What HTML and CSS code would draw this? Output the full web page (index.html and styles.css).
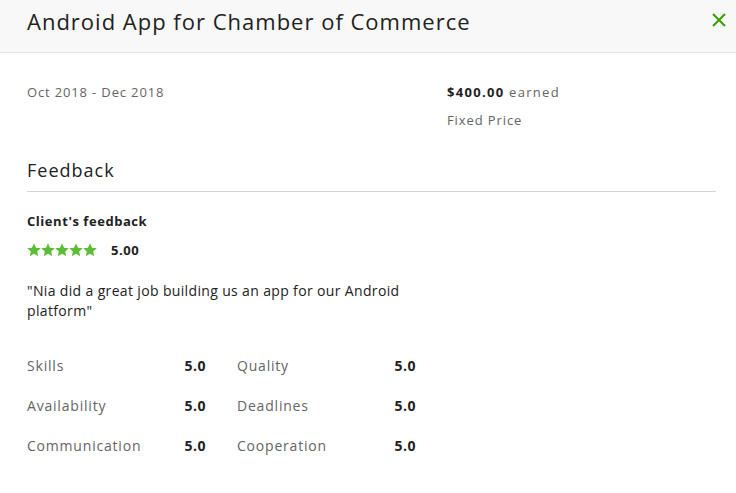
FILE: index.html
```html
<!DOCTYPE html>
<html>
<head>
<meta charset="utf-8">
<link rel="stylesheet" href="styles.css">
</head>
<body>
<div class="modal">
  <header class="head">
    <h1 class="title">Android App for Chamber of Commerce</h1>
    <svg class="close" width="14" height="14" viewBox="0 0 14 14"><path d="M1 1 L13 13 M13 1 L1 13" stroke="#37a000" stroke-width="2" fill="none"/></svg>
  </header>
  <div class="body">
    <div class="meta">
      <div class="dates">Oct 2018 - Dec 2018</div>
      <div class="price">
        <div class="earned"><strong>$400.00</strong> earned</div>
        <div class="type">Fixed Price</div>
      </div>
    </div>
    <h2 class="section">Feedback</h2>
    <h3 class="sub">Client's feedback</h3>
    <div class="rating">
      <div class="stars">
        <svg viewBox="0 0 24 24"><path d="M12 0.5l3.4 7.6 8.2.8-6.2 5.5 1.8 8.1L12 18.3 4.8 22.5l1.8-8.1L0.4 8.9l8.2-.8z"/></svg>
        <svg viewBox="0 0 24 24"><path d="M12 0.5l3.4 7.6 8.2.8-6.2 5.5 1.8 8.1L12 18.3 4.8 22.5l1.8-8.1L0.4 8.9l8.2-.8z"/></svg>
        <svg viewBox="0 0 24 24"><path d="M12 0.5l3.4 7.6 8.2.8-6.2 5.5 1.8 8.1L12 18.3 4.8 22.5l1.8-8.1L0.4 8.9l8.2-.8z"/></svg>
        <svg viewBox="0 0 24 24"><path d="M12 0.5l3.4 7.6 8.2.8-6.2 5.5 1.8 8.1L12 18.3 4.8 22.5l1.8-8.1L0.4 8.9l8.2-.8z"/></svg>
        <svg viewBox="0 0 24 24"><path d="M12 0.5l3.4 7.6 8.2.8-6.2 5.5 1.8 8.1L12 18.3 4.8 22.5l1.8-8.1L0.4 8.9l8.2-.8z"/></svg>
      </div>
      <strong class="score">5.00</strong>
    </div>
    <p class="quote">"Nia did a great job building us an app for our Android platform"</p>
    <div class="scores">
      <div class="row"><span class="lbl">Skills</span><span class="val">5.0</span></div>
      <div class="row"><span class="lbl">Quality</span><span class="val">5.0</span></div>
      <div class="row"><span class="lbl">Availability</span><span class="val">5.0</span></div>
      <div class="row"><span class="lbl">Deadlines</span><span class="val">5.0</span></div>
      <div class="row"><span class="lbl">Communication</span><span class="val">5.0</span></div>
      <div class="row"><span class="lbl">Cooperation</span><span class="val">5.0</span></div>
    </div>
  </div>
</div>
</body>
</html>
```
FILE: styles.css
```css
* { box-sizing: border-box; }
html, body { margin: 0; padding: 0; background: #fff; }
body { font-family: "Open Sans", "Lato", sans-serif; color: #222; width: 736px; height: 493px; overflow: hidden; }
.head {
  height: 53px;
  background: #f8f8f8;
  border-bottom: 1px solid #e4e4e4;
  display: flex;
  align-items: center;
  justify-content: space-between;
  padding: 0 10px 0 27px;
}
.title { margin: 0; font-size: 22px; font-weight: 400; color: #222; letter-spacing: 1px; padding-bottom: 10px; }
.close { width: 14px; height: 14px; margin-bottom: 12px; }
.body { padding: 0 20px 0 27px; }
.meta { display: grid; grid-template-columns: 420px 1fr; padding-top: 29px; font-size: 13px; color: #656565; }
.dates { line-height: 20px; letter-spacing: 0.85px; }
.price { line-height: 20px; letter-spacing: 0.9px; }
.earned { letter-spacing: 1.3px; }
.price strong { color: #222; font-weight: 700; }
.type { margin-top: 8px; }
.section { margin: 29px 0 0; font-size: 18px; font-weight: 400; line-height: 22px; padding-bottom: 10px; border-bottom: 1px solid #d5d5d5; letter-spacing: 1px; }
.sub { margin: 20px 0 0; font-size: 13px; font-weight: 700; line-height: 18px; letter-spacing: 0.55px; }
.rating { display: flex; align-items: center; margin-top: 11px; height: 18px; }
.stars { display: flex; gap: 0; width: 84px; }
.stars svg { width: 14px; height: 14px; fill: #5bbd35; }
.score { font-size: 13px; font-weight: 700; letter-spacing: 0.6px; }
.quote { margin: 22px 0 0; width: 410px; font-size: 14px; line-height: 20px; letter-spacing: 0.35px; }
.scores { display: grid; grid-template-columns: 179px 179px; column-gap: 31px; row-gap: 20px; margin-top: 35px; }
.row { display: flex; justify-content: space-between; font-size: 14px; line-height: 20px; letter-spacing: 0.8px; }
.lbl { color: #656565; }
.val { font-weight: 700; color: #222; letter-spacing: 0.5px; }
```
